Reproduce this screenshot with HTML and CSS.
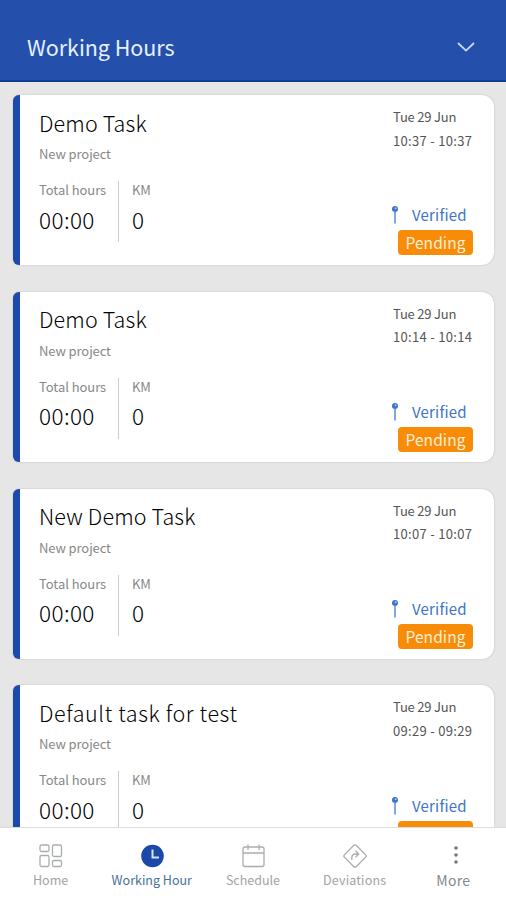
FILE: index.html
```html
<!DOCTYPE html>
<html lang="en">
<head>
<meta charset="utf-8">
<title>Working Hours</title>
<link rel="stylesheet" href="styles.css">
</head>
<body>
<div class="app">
  <header class="header">
    <h1>Working Hours</h1>
    <svg class="chevron" width="20" height="12" viewBox="0 0 20 12"><path d="M2 2l8 7.600L18 2"/></svg>
  </header>
  <main class="list">
    <article class="card">
      <div class="info">
        <h2>Demo Task</h2>
        <p class="project">New project</p>
        <div class="stats">
          <div class="stat hours"><span class="label">Total hours</span><span class="value">00:00</span></div>
          <div class="stat km"><span class="label">KM</span><span class="value">0</span></div>
        </div>
      </div>
      <div class="side">
        <span class="date">Tue 29 Jun</span><span class="time">10:37 - 10:37</span>
        <div class="verified"><svg width="8" height="20" viewBox="0 0 8 20"><circle cx="4" cy="4" r="3"/><path d="M4 6v12.500"/><circle class="shine" cx="4.700" cy="3.200" r="1"/></svg><span>Verified</span></div>
        <span class="badge">Pending</span>
      </div>
    </article>
    <article class="card">
      <div class="info">
        <h2>Demo Task</h2>
        <p class="project">New project</p>
        <div class="stats">
          <div class="stat hours"><span class="label">Total hours</span><span class="value">00:00</span></div>
          <div class="stat km"><span class="label">KM</span><span class="value">0</span></div>
        </div>
      </div>
      <div class="side">
        <span class="date">Tue 29 Jun</span><span class="time">10:14 - 10:14</span>
        <div class="verified"><svg width="8" height="20" viewBox="0 0 8 20"><circle cx="4" cy="4" r="3"/><path d="M4 6v12.500"/><circle class="shine" cx="4.700" cy="3.200" r="1"/></svg><span>Verified</span></div>
        <span class="badge">Pending</span>
      </div>
    </article>
    <article class="card">
      <div class="info">
        <h2>New Demo Task</h2>
        <p class="project">New project</p>
        <div class="stats">
          <div class="stat hours"><span class="label">Total hours</span><span class="value">00:00</span></div>
          <div class="stat km"><span class="label">KM</span><span class="value">0</span></div>
        </div>
      </div>
      <div class="side">
        <span class="date">Tue 29 Jun</span><span class="time">10:07 - 10:07</span>
        <div class="verified"><svg width="8" height="20" viewBox="0 0 8 20"><circle cx="4" cy="4" r="3"/><path d="M4 6v12.500"/><circle class="shine" cx="4.700" cy="3.200" r="1"/></svg><span>Verified</span></div>
        <span class="badge">Pending</span>
      </div>
    </article>
    <article class="card">
      <div class="info">
        <h2 class="long">Default task for test</h2>
        <p class="project">New project</p>
        <div class="stats">
          <div class="stat hours"><span class="label">Total hours</span><span class="value">00:00</span></div>
          <div class="stat km"><span class="label">KM</span><span class="value">0</span></div>
        </div>
      </div>
      <div class="side">
        <span class="date">Tue 29 Jun</span><span class="time">09:29 - 09:29</span>
        <div class="verified"><svg width="8" height="20" viewBox="0 0 8 20"><circle cx="4" cy="4" r="3"/><path d="M4 6v12.500"/><circle class="shine" cx="4.700" cy="3.200" r="1"/></svg><span>Verified</span></div>
        <span class="badge"></span>
      </div>
    </article>
  </main>
  <nav class="nav">
    <a class="tab"><svg width="26" height="26" viewBox="0 0 26 26"><rect x="2" y="2" width="9" height="6.500" rx="1.500"/><rect x="14.500" y="2" width="9" height="11.500" rx="1.500"/><rect x="2" y="12.500" width="9" height="11" rx="1.500"/><rect x="14.500" y="17.500" width="9" height="6" rx="1.500"/></svg><span>Home</span></a>
    <a class="tab active"><svg width="26" height="26" viewBox="0 0 26 26"><circle cx="13.500" cy="13" r="11.300"/><path d="M13.500 6.500v8h6.500"/></svg><span>Working Hour</span></a>
    <a class="tab"><svg width="26" height="26" viewBox="0 0 26 26"><rect x="3" y="4" width="21" height="19.500" rx="2"/><path d="M3 10h21M8 1.500V7M19 1.500V7"/></svg><span>Schedule</span></a>
    <a class="tab"><svg width="26" height="26" viewBox="0 0 26 26"><rect x="5.600" y="4.600" width="16.800" height="16.800" rx="2" transform="rotate(45 14 13)"/><path d="M10.800 17v-2q0-4 4-4h2.500M14.500 7.800l3.200 3.200-3.200 3.200"/></svg><span>Deviations</span></a>
    <a class="tab more"><svg width="26" height="26" viewBox="0 0 26 26"><circle cx="16" cy="5" r="1.800"/><circle cx="16" cy="12" r="1.800"/><circle cx="16" cy="19" r="1.800"/></svg><span>More</span></a>
  </nav>
</div>
</body>
</html>
```
FILE: styles.css
```css
* { box-sizing: border-box; }
body { margin: 0; font-family: "Noto Sans CJK SC", "Noto Sans", sans-serif; }
h1, h2, p { margin: 0; font-weight: 400; }
svg { display: block; flex: none; fill: none; }
.app { width: 506px; height: 900px; display: flex; flex-direction: column; overflow: hidden; background: #e6e6e6; }
.header { flex: none; height: 82px; padding: 32px 30px 0 27px; display: flex; justify-content: space-between; background: #2450ab; border-bottom: 2px solid #0c3d91; }
.header h1 { font-size: 21.5px; line-height: 30px; letter-spacing: -.05px; color: #e6f1ff; }
.chevron { margin-top: 9px; stroke: #c5dcff; stroke-width: 1.8; }
.list { flex: 1; min-height: 0; overflow: hidden; padding: 13px 12px 0 13px; display: flex; flex-direction: column; gap: 26.8px; }
.card { flex: none; height: 170px; display: flex; justify-content: space-between; padding: 15.5px 21px 0 19px; border-left: 7px solid #1d49aa; border-radius: 6px 12px 12px 6px; background: #fff; box-shadow: 0 0 1.5px #aaa; }
.card h2 { font-size: 21.5px; font-weight: 300; line-height: 24px; letter-spacing: .15px; color: #000; white-space: nowrap; }
.card .long { letter-spacing: .6px; }
.project { margin-top: 10.5px; font-size: 13px; line-height: 18px; letter-spacing: -.1px; color: #888; }
.stats { display: flex; margin-top: 18px; height: 61px; }
.stat { display: flex; flex-direction: column; }
.hours { width: 80px; border-right: 1.5px solid #ccc; }
.km { padding-left: 13px; }
.label { font-size: 13px; line-height: 18px; color: #888; letter-spacing: -.05px; }
.value { margin-top: 4.5px; font-size: 22.5px; font-weight: 300; line-height: 30px; letter-spacing: .4px; color: #000; }
.side { width: 80px; margin-top: -5.5px; display: flex; flex-direction: column; }
.date, .time { font-size: 13px; line-height: 23.6px; color: #555; white-space: nowrap; }
.date { letter-spacing: -.2px; }
.time { letter-spacing: .3px; }
.verified { display: flex; align-items: center; gap: 13px; height: 24px; margin-top: 51px; font-size: 15px; line-height: 24px; letter-spacing: .2px; color: #3d74c7; margin-left: -2px; }
.verified circle { fill: #3973ca; }
.verified path { stroke: #5b8bd3; stroke-width: 1.5; }
.verified .shine { fill: #a9caf5; }
.badge { align-self: flex-end; width: 75px; height: 25px; margin-top: 3px; border-radius: 4px; background: #f88b08; color: #fff0d8; font-size: 15.5px; line-height: 25px; letter-spacing: .1px; text-align: center; }
.nav { flex: none; height: 73px; display: grid; grid-template-columns: repeat(5, 101.2px); background: #fff; border-top: 1px solid #ddd; }
.tab { display: flex; flex-direction: column; align-items: center; padding-top: 15px; font-size: 12.5px; line-height: 18px; color: #a0a4a7; white-space: nowrap; }
.tab span { margin-top: 2px; }
.tab svg { stroke: #aaadaf; stroke-width: 1.3; }
.tab:nth-child(4) span { letter-spacing: .15px; padding-left: 1px; }
.active { color: #47719b; }
.active circle { fill: #1b49a9; stroke: none; }
.active path { stroke: #d5e4fa; stroke-width: 2; }
.tab.more { font-size: 14px; letter-spacing: .3px; color: #85898b; margin-left: -4px; }
.more circle { fill: #777; stroke: none; }
```
